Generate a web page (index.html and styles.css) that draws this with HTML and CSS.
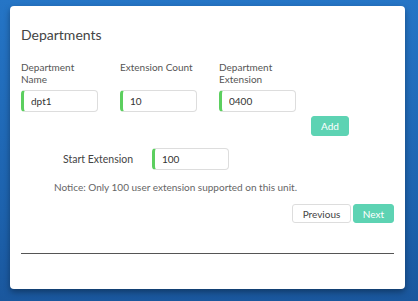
FILE: index.html
```html
<!DOCTYPE html>
<html lang="en">
<head>
    <meta charset="UTF-8">
    <meta name="viewport" content="width=device-width, initial-scale=1.0">
    <title>Departments</title>
    <link rel="stylesheet" href="styles.css">
</head>
<body>
<div class="card">
    <h2 class="title">Departments</h2>

    <!-- Department fields -->
    <div class="fields">
        <div class="field">
            <label>Department Name</label>
            <input type="text" class="text-input" value="dpt1">
        </div>
        <div class="field">
            <label>Extension Count</label>
            <input type="text" class="text-input" value="10">
        </div>
        <div class="field">
            <label>Department Extension</label>
            <input type="text" class="text-input" value="0400">
        </div>
    </div>
    <div class="add-row">
        <button class="btn btn-primary">Add</button>
    </div>

    <div class="start-row">
        <label class="start-label">Start Extension</label>
        <input type="text" class="text-input" value="100">
    </div>
    <p class="notice">Notice: Only 100 user extension supported on this unit.</p>

    <div class="nav-row">
        <button class="btn btn-default">Previous</button>
        <button class="btn btn-primary">Next</button>
    </div>

    <hr class="divider">
</div>
</body>
</html>
```

FILE: styles.css
```css
body {
    margin: 0;
    padding: 6px 0 0 10px;
    height: 301px;
    box-sizing: border-box;
    overflow: hidden;
    font-family: 'Lato', 'Helvetica', sans-serif;
    background: linear-gradient(to bottom, #2575c6, #1d62ad 70%, #1a579d);
}

.card {
    width: 395px;
    height: 283px;
    box-sizing: border-box;
    background: #fff;
    border-radius: 4px;
    padding: 20px 11px 0 11px;
    box-shadow: 0 3px 6px rgba(0, 0, 0, 0.35);
}

.title {
    margin: 0;
    font-size: 14px;
    line-height: 18px;
    font-weight: normal;
    color: #444;
}

.fields {
    display: flex;
    gap: 22px;
    margin-top: 17px;
}

.field {
    width: 77px;
    display: flex;
    flex-direction: column;
}

.field label {
    font-size: 10px;
    line-height: 12px;
    height: 24px;
    color: #555;
    margin-bottom: 5px;
}

.text-input {
    width: 77px;
    height: 22px;
    box-sizing: border-box;
    border: 1px solid #ddd;
    border-left: 3px solid #5ccf5f;
    border-radius: 4px;
    padding: 0 0 0 7px;
    font-family: inherit;
    font-size: 10px;
    color: #333;
    outline: none;
}

.add-row {
    display: flex;
    margin-top: 4px;
    padding-left: 290px;
}

.btn {
    height: 20px;
    box-sizing: border-box;
    border-radius: 3px;
    font-family: inherit;
    font-size: 10px;
    padding: 0;
    cursor: pointer;
}

.btn-primary {
    background-color: #5dd3b3;
    border: 1px solid #5dd3b3;
    color: white;
    width: 39px;
}

.add-row .btn-primary {
    width: 38px;
}

.btn-default {
    background-color: #fff;
    border: 1px solid #ddd;
    color: #444;
    width: 59px;
}

.start-row {
    display: flex;
    align-items: center;
    margin-top: 12px;
    padding-left: 42px;
}

.start-label {
    width: 89px;
    font-size: 10.5px;
    color: #444;
}

.notice {
    margin: 11px 0 0 33px;
    font-size: 10px;
    line-height: 12px;
    color: #666;
}

.nav-row {
    display: flex;
    justify-content: flex-end;
    gap: 2px;
    margin-top: 11px;
}

.nav-row .btn {
    height: 19px;
}

.nav-row .btn-primary {
    width: 41px;
}

.divider {
    margin: 30px 0 0 0;
    border: none;
    border-top: 1px solid #555;
}
```
